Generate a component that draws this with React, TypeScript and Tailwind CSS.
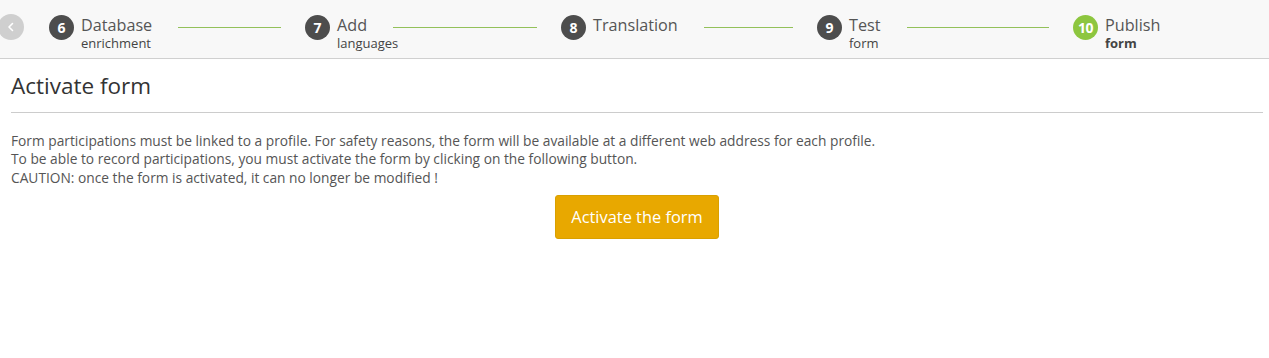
const steps = [
  { n: "6", title: "Database", sub: "enrichment" },
  { n: "7", title: "Add", sub: "languages" },
  { n: "8", title: "Translation", sub: "" },
  { n: "9", title: "Test", sub: "form" },
  { n: "10", title: "Publish", sub: "form", active: true },
];

function Step({ n, title, sub, active, last }: { n: string; title: string; sub: string; active?: boolean; last?: boolean }) {
  return (
    <div className="flex w-[256px] shrink-0 items-start">
      <div
        className={
          "flex h-[25px] w-[25px] shrink-0 items-center justify-center rounded-full text-[14px] font-bold leading-none text-white " +
          (active ? "bg-[#8dc63f] tracking-[-0.5px]" : "bg-[#4d4d4d]")
        }
      >
        {n}
      </div>
      <div className="relative ml-[7px] shrink-0">
        <div className="text-[16.2px] leading-[20px] text-[#555]">{title}</div>
        {sub && (
          <div
            className={
              "absolute left-0 top-full whitespace-nowrap text-[13px] leading-[16px] " +
              (active ? "font-bold text-[#444]" : "text-[#444]")
            }
          >
            {sub}
          </div>
        )}
      </div>
      {!last && <div className="ml-[26px] mr-[24px] mt-[12px] h-px flex-1 bg-[#93c15a]" />}
    </div>
  );
}

export default function App() {
  return (
    <div className="min-h-[358px] bg-white font-['Open_Sans',sans-serif] text-[#555]">
      <div className="flex h-[59px] items-start overflow-hidden border-b border-[#d0d0d0] bg-[#f8f8f8] pt-[14px]">
        <div className="ml-[-2px] flex h-[26px] w-[26px] shrink-0 items-center justify-center rounded-full bg-[#cfcfcf]">
          <svg width="8" height="10" viewBox="0 0 8 10" fill="none">
            <path d="M5.5 1.5 2 5l3.5 3.5" stroke="white" strokeWidth="1.6" strokeLinecap="round" strokeLinejoin="round" />
          </svg>
        </div>
        <div className="ml-[25px] flex pt-px">
          {steps.map((s, i) => (
            <Step key={s.n} {...s} last={i === steps.length - 1} />
          ))}
        </div>
      </div>

      <div className="pl-[11px] pr-[6px]">
        <h3 className="mt-[15px] text-[22.5px] leading-[1.1] text-[#333]">Activate form</h3>
        <hr className="mt-[13px] border-t border-[#cccccc]" />
        <p className="mt-[19px] text-[13.75px] leading-[18.6px] text-[#555]">
          Form participations must be linked to a profile. For safety reasons, the form will be available at a different web address for each profile.
          <br />
          To be able to record participations, you must activate the form by clicking on the following button.
          <br />
          CAUTION: once the form is activated, it can no longer be modified !
        </p>
        <div className="mt-[7px] flex justify-center">
          <button
            type="button"
            className="rounded-[3px] border border-[#d9a000] bg-[#e8a800] px-[15px] py-[10px] text-[16.4px] leading-[22px] text-white"
          >
            Activate the form
          </button>
        </div>
      </div>
    </div>
  );
}
